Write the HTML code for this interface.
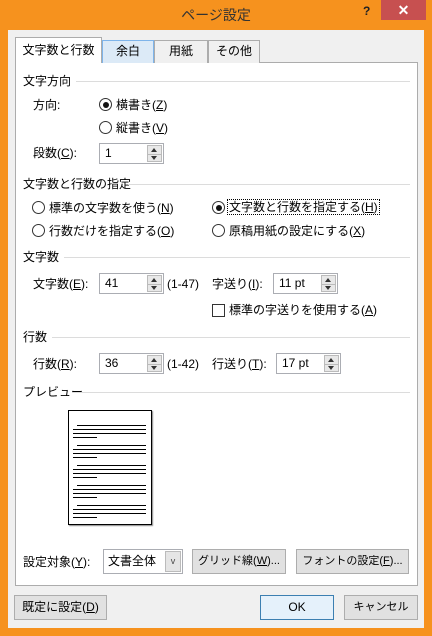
<!DOCTYPE html>
<html><head><meta charset="utf-8"><style>
*{margin:0;padding:0;box-sizing:border-box}
body{width:432px;height:636px;background:#f6921e;position:relative;overflow:hidden;font-family:"Liberation Sans","Noto Sans CJK JP",sans-serif;font-size:12px;color:#000}
.a{position:absolute;white-space:nowrap;line-height:14px}
.client{position:absolute;left:8px;top:30px;width:416px;height:598px;background:#f0f0f0}
.panel{position:absolute;left:15px;top:62px;width:403px;height:524px;background:#fff;border:1px solid #acacac}
.tab{position:absolute;top:40px;height:23px;background:#f0f0f0;border:1px solid #acacac;border-bottom:none;text-align:center;line-height:20px;font-size:12px}
.hl{position:absolute;height:1px;background:#dcdcdc}
.rad{position:absolute;width:13px;height:13px;border:1px solid #333;border-radius:50%;background:#fff}
.rad.on::after{content:"";position:absolute;left:2.5px;top:2.5px;width:6px;height:6px;border-radius:50%;background:#111}
.spin{position:absolute;height:21px;border:1px solid #abadb3;background:#fff;padding-left:5px;line-height:19px}
.spin .b{position:absolute;right:1px;top:1px;width:15px;height:17px;background:#e8e8e8;border:1px solid #bbb}
.spin .b::before{content:"";position:absolute;left:3px;top:2px;border:3.5px solid transparent;border-bottom:4px solid #333;border-top:none}
.spin .b::after{content:"";position:absolute;left:3px;top:10px;border:3.5px solid transparent;border-top:4px solid #333;border-bottom:none}
.spin .b i{position:absolute;left:0;right:0;top:7.5px;height:1px;background:#bbb}
.btn{position:absolute;height:25px;border:1px solid #adadad;background:#e1e1e1;text-align:center;line-height:23px}
u{text-decoration:underline}
.pl{position:absolute;height:1px;background:#000}
</style></head><body>
<div class="a" style="left:0;width:432px;top:6px;text-align:center;font-size:14px;line-height:18px;color:#333">ページ設定</div>
<div class="a" style="left:363px;top:4px;font-weight:bold;font-size:12px;color:#222">?</div>
<div style="position:absolute;left:381px;top:0;width:45px;height:20px;background:#c75050;color:#fff;text-align:center;line-height:20px;font-size:14px;font-weight:bold">✕</div>
<div class="client"></div>
<div class="panel"></div>
<div class="tab" style="left:102px;width:52px;background:#dceaf7;border-color:#7eb4ea">余白</div>
<div class="tab" style="left:154px;width:54px">用紙</div>
<div class="tab" style="left:208px;width:52px">その他</div>
<div class="tab" style="left:15px;top:37px;width:87px;height:26px;background:#fff;line-height:24px">文字数と行数</div>

<div class="a" style="left:23px;top:74px">文字方向</div><div class="hl" style="left:76px;width:334px;top:81px"></div>
<div class="a" style="left:33px;top:98px">方向:</div>
<div class="rad on" style="left:99px;top:98px"></div><div class="a" style="left:116px;top:98px">横書き(<u>Z</u>)</div>
<div class="rad" style="left:99px;top:121px"></div><div class="a" style="left:116px;top:121px">縦書き(<u>V</u>)</div>
<div class="a" style="left:33px;top:146px">段数(<u>C</u>):</div>
<div class="spin" style="left:99px;top:143px;width:65px">1<div class="b"><i></i></div></div>

<div class="a" style="left:23px;top:177px">文字数と行数の指定</div><div class="hl" style="left:128px;width:282px;top:184px"></div>
<div class="rad" style="left:32px;top:201px"></div><div class="a" style="left:49px;top:201px">標準の文字数を使う(<u>N</u>)</div>
<div class="rad on" style="left:212px;top:201px"></div><div class="a" style="left:228px;top:200px;outline:1px dotted #000;padding:0 1px">文字数と行数を指定する(<u>H</u>)</div>
<div class="rad" style="left:32px;top:224px"></div><div class="a" style="left:49px;top:224px">行数だけを指定する(<u>O</u>)</div>
<div class="rad" style="left:212px;top:224px"></div><div class="a" style="left:229px;top:224px">原稿用紙の設定にする(<u>X</u>)</div>

<div class="a" style="left:23px;top:250px">文字数</div><div class="hl" style="left:64px;width:346px;top:257px"></div>
<div class="a" style="left:33px;top:277px">文字数(<u>E</u>):</div>
<div class="spin" style="left:99px;top:273px;width:65px">41<div class="b"><i></i></div></div>
<div class="a" style="left:167px;top:277px">(1-47)</div>
<div class="a" style="left:212px;top:277px">字送り(<u>I</u>):</div>
<div class="spin" style="left:273px;top:273px;width:65px">11 pt<div class="b"><i></i></div></div>
<div style="position:absolute;left:212px;top:304px;width:13px;height:13px;border:1px solid #333;background:#fff"></div>
<div class="a" style="left:229px;top:303px">標準の字送りを使用する(<u>A</u>)</div>

<div class="a" style="left:23px;top:330px">行数</div><div class="hl" style="left:52px;width:358px;top:337px"></div>
<div class="a" style="left:33px;top:357px">行数(<u>R</u>):</div>
<div class="spin" style="left:99px;top:353px;width:65px">36<div class="b"><i></i></div></div>
<div class="a" style="left:167px;top:357px">(1-42)</div>
<div class="a" style="left:212px;top:357px">行送り(<u>T</u>):</div>
<div class="spin" style="left:276px;top:353px;width:65px">17 pt<div class="b"><i></i></div></div>

<div class="a" style="left:23px;top:385px">プレビュー</div><div class="hl" style="left:72px;width:338px;top:392px"></div>
<div style="position:absolute;left:68px;top:410px;width:84px;height:115px;border:1px solid #000;background:#fff;box-shadow:1px 1px 1px #888"></div>
<div id="pv"></div>
<div class="pl" style="left:77px;width:69px;top:425px"></div><div class="pl" style="left:73px;width:73px;top:429px"></div><div class="pl" style="left:73px;width:73px;top:433px"></div><div class="pl" style="left:73px;width:24px;top:437px"></div>
<div class="pl" style="left:77px;width:69px;top:445px"></div><div class="pl" style="left:73px;width:73px;top:449px"></div><div class="pl" style="left:73px;width:73px;top:453px"></div><div class="pl" style="left:73px;width:24px;top:457px"></div>
<div class="pl" style="left:77px;width:69px;top:465px"></div><div class="pl" style="left:73px;width:73px;top:469px"></div><div class="pl" style="left:73px;width:73px;top:473px"></div><div class="pl" style="left:73px;width:24px;top:477px"></div>
<div class="pl" style="left:77px;width:69px;top:485px"></div><div class="pl" style="left:73px;width:73px;top:489px"></div><div class="pl" style="left:73px;width:73px;top:493px"></div><div class="pl" style="left:73px;width:24px;top:497px"></div>
<div class="pl" style="left:77px;width:69px;top:505px"></div><div class="pl" style="left:73px;width:73px;top:509px"></div><div class="pl" style="left:73px;width:73px;top:513px"></div><div class="pl" style="left:73px;width:24px;top:517px"></div>

<div class="a" style="left:23px;top:555px">設定対象(<u>Y</u>):</div>
<div style="position:absolute;left:103px;top:549px;width:80px;height:25px;border:1px solid #abadb3;background:#fff;padding-left:4px;line-height:23px">文書全体
<div style="position:absolute;right:1px;top:1px;width:16px;height:21px;background:#e5e5e5;border:1px solid #bbb;text-align:center;line-height:19px;font-size:9px;color:#444">v</div></div>
<div class="btn" style="left:192px;top:549px;width:94px;font-size:11px">グリッド線(<u>W</u>)...</div>
<div class="btn" style="left:296px;top:549px;width:113px;font-size:11px">フォントの設定(<u>F</u>)...</div>

<div class="btn" style="left:14px;top:595px;width:93px">既定に設定(<u>D</u>)</div>
<div class="btn" style="left:260px;top:595px;width:74px;border-color:#3c7fb1;background:#e5f1fb">OK</div>
<div class="btn" style="left:344px;top:595px;width:74px;font-size:11px">キャンセル</div>
</body></html>
